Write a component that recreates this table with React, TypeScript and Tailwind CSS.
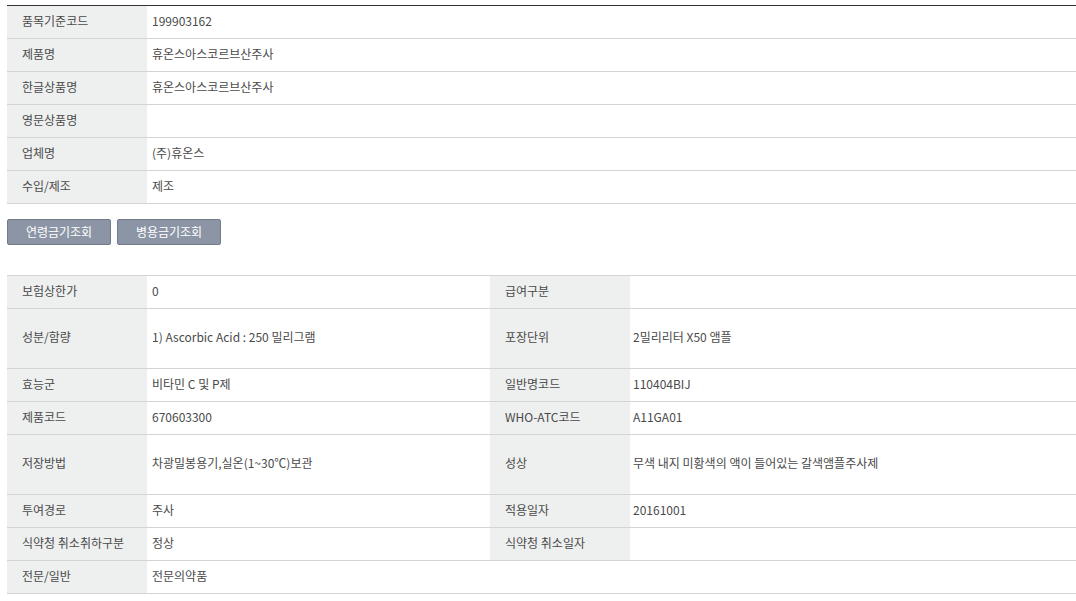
const font = { fontFamily: '"Noto Sans CJK KR", "Noto Sans", sans-serif' };

const basicRows: [string, string][] = [
  ["품목기준코드", "199903162"],
  ["제품명", "휴온스아스코르브산주사"],
  ["한글상품명", "휴온스아스코르브산주사"],
  ["영문상품명", ""],
  ["업체명", "(주)휴온스"],
  ["수입/제조", "제조"],
];

interface DetailRow {
  h: string;
  cells: [string, string, string?, string?];
}

const detailRows: DetailRow[] = [
  { h: "h-[33px]", cells: ["보험상한가", "0", "급여구분", ""] },
  { h: "h-[60px]", cells: ["성분/함량", "1) Ascorbic Acid : 250 밀리그램", "포장단위", "2밀리리터 X50 앰플"] },
  { h: "h-[33px]", cells: ["효능군", "비타민 C 및 P제", "일반명코드", "110404BIJ"] },
  { h: "h-[33px]", cells: ["제품코드", "670603300", "WHO-ATC코드", "A11GA01"] },
  { h: "h-[60px]", cells: ["저장방법", "차광밀봉용기,실온(1~30℃)보관", "성상", "무색 내지 미황색의 액이 들어있는 갈색앰플주사제"] },
  { h: "h-[33px]", cells: ["투여경로", "주사", "적용일자", "20161001"] },
  { h: "h-[33px]", cells: ["식약청 취소취하구분", "정상", "식약청 취소일자", ""] },
  { h: "h-[33px]", cells: ["전문/일반", "전문의약품"] },
];

export default function App() {
  return (
    <div className="bg-white w-[1076px] h-[601px] overflow-hidden pt-[5px] pl-[7px] text-[12px] text-[#4a4a4a]" style={font}>
      <table className="w-[1069px] border-collapse border-t border-t-[#333] table-fixed">
        <colgroup>
          <col className="w-[140px]" />
          <col />
        </colgroup>
        <tbody>
          {basicRows.map(([label, value]) => (
            <tr key={label} className="h-[33px] border-b border-[#d4d4d4]">
              <th className="bg-[#eef0ef] text-left font-normal pl-[15px] pb-[3px] align-middle">{label}</th>
              <td className="pl-[5px] pb-[3px] align-middle">{value}</td>
            </tr>
          ))}
        </tbody>
      </table>

      <div className="flex gap-[6px] mt-[15px]">
        <button className="w-[104px] h-[26px] pb-[1px] bg-[#8c95a5] border border-[#747c8b] rounded-[2px] text-white text-[12px]">
          연령금기조회
        </button>
        <button className="w-[104px] h-[26px] pb-[1px] bg-[#8c95a5] border border-[#747c8b] rounded-[2px] text-white text-[12px]">
          병용금기조회
        </button>
      </div>

      <table className="w-[1069px] border-collapse border-t border-t-[#d4d4d4] table-fixed mt-[30px]">
        <colgroup>
          <col className="w-[140px]" />
          <col className="w-[343px]" />
          <col className="w-[140px]" />
          <col />
        </colgroup>
        <tbody>
          {detailRows.map((row) => (
            <tr key={row.cells[0]} className={`${row.h} border-b border-[#d4d4d4]`}>
              <th className="bg-[#eef0ef] text-left font-normal pl-[15px] pb-[3px] align-middle">{row.cells[0]}</th>
              {row.cells.length > 2 ? (
                <>
                  <td className="pl-[5px] pb-[3px] align-middle">{row.cells[1]}</td>
                  <th className="bg-[#eef0ef] text-left font-normal pl-[15px] pb-[3px] align-middle">{row.cells[2]}</th>
                  <td className="pl-[3px] pb-[3px] align-middle">{row.cells[3]}</td>
                </>
              ) : (
                <td colSpan={3} className="pl-[5px] pb-[3px] align-middle">{row.cells[1]}</td>
              )}
            </tr>
          ))}
        </tbody>
      </table>
    </div>
  );
}
